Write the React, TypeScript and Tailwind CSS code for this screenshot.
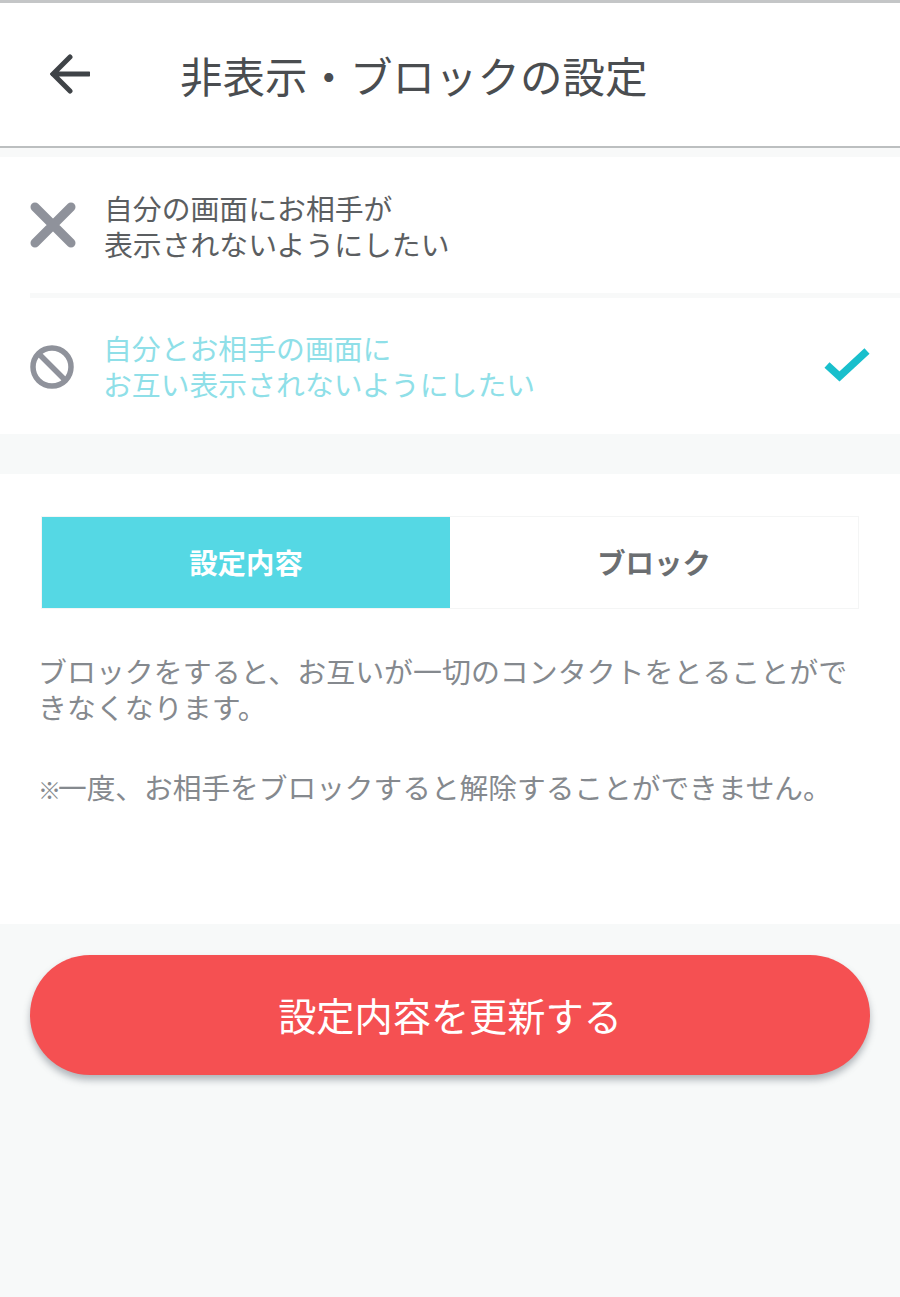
import React from 'react'

const font = { fontFamily: '"Noto Sans CJK JP", "Noto Sans", sans-serif' }

const App: React.FC = () => {
  return (
    <div className="w-[900px] h-[1297px] overflow-hidden flex flex-col bg-[#f7f9f9]" style={font}>
      {/* header */}
      <header className="h-[148px] shrink-0 flex items-center bg-white border-t-[3px] border-t-[#c4c6c7] border-b-2 border-b-[#bcbfc0]">
        <svg width="40" height="40" viewBox="0 0 40 40" className="ml-[50px] mt-[-1px] shrink-0">
          <path d="M20 3 L3 20 L20 37 M3 20 H39" fill="none" stroke="#3f4347" strokeWidth="5" strokeLinecap="round" strokeLinejoin="miter" />
        </svg>
        <h1 className="ml-[90px] mt-[2px] text-[42.5px] leading-none font-normal text-[#4a4d50] whitespace-nowrap">
          非表示・ブロックの設定
        </h1>
      </header>

      {/* shadow strip under header */}
      <div className="h-[9px] shrink-0 bg-[#f8f9f9]" />

      {/* options */}
      <section className="bg-white shrink-0">
        <div className="h-[136px] flex items-center pl-[30px]">
          <svg width="46" height="46" viewBox="0 0 46 46" className="shrink-0">
            <path d="M5 5 L41 41 M41 5 L5 41" stroke="#8f929b" strokeWidth="9" strokeLinecap="round" />
          </svg>
          <p className="ml-[28px] mt-[2px] text-[28.85px] leading-[36px] text-[#5b5e61]">
            自分の画面にお相手が
            <br />
            表示されないようにしたい
          </p>
        </div>
        <div className="ml-[30px] h-[5px] bg-[#f8f9f9]" />
        <div className="h-[136px] flex items-center pl-[30px] pr-[30px]">
          <svg width="44" height="44" viewBox="0 0 44 44" className="shrink-0 mt-[1px]">
            <circle cx="22" cy="22" r="19" fill="none" stroke="#8f929b" strokeWidth="5.5" />
            <path d="M9 9 L35 35" stroke="#8f929b" strokeWidth="5.5" />
          </svg>
          <p className="ml-[29px] text-[28.85px] leading-[36px] text-[#8fdfe8]">
            自分とお相手の画面に
            <br />
            お互い表示されないようにしたい
          </p>
          <svg width="46" height="36" viewBox="0 0 46 36" className="ml-auto shrink-0 mt-[-3px]">
            <path d="M3 18 L15.5 29.5 L43 4" fill="none" stroke="#19bfcc" strokeWidth="7.5" />
          </svg>
        </div>
      </section>

      <div className="h-[40px] shrink-0" />

      {/* block settings */}
      <section className="h-[450px] shrink-0 bg-white pt-[42px]">
        <div className="mx-[41px] h-[93px] flex border border-[#f4f5f5]">
          <div className="w-[408px] flex items-center justify-center bg-[#55d8e4] text-white text-[28.4px] font-bold">
            設定内容
          </div>
          <div className="flex-1 flex items-center justify-center bg-white text-[#6b6e71] text-[28.4px] font-bold">
            ブロック
          </div>
        </div>
        <p className="mt-[43px] ml-[38px] mr-[36px] text-[28.95px] leading-[36px] text-[#85898e]">
          ブロックをすると、お互いが一切のコンタクトをとることができなくなります。
        </p>
        <p className="mt-[45px] ml-[38px] text-[28.7px] leading-[36px] text-[#85898e] whitespace-nowrap">
          <span className="text-[23px] font-bold tracking-[-3px]">※</span>一度、お相手をブロックすると解除することができません。
        </p>
      </section>

      {/* submit */}
      <div className="pt-[31px] px-[30px]">
        <button className="w-full h-[120px] rounded-full bg-[#f55052] text-white text-[38.2px] shadow-[0_5px_7px_rgba(90,100,110,0.45)]">
          設定内容を更新する
        </button>
      </div>
    </div>
  )
}

export default App
